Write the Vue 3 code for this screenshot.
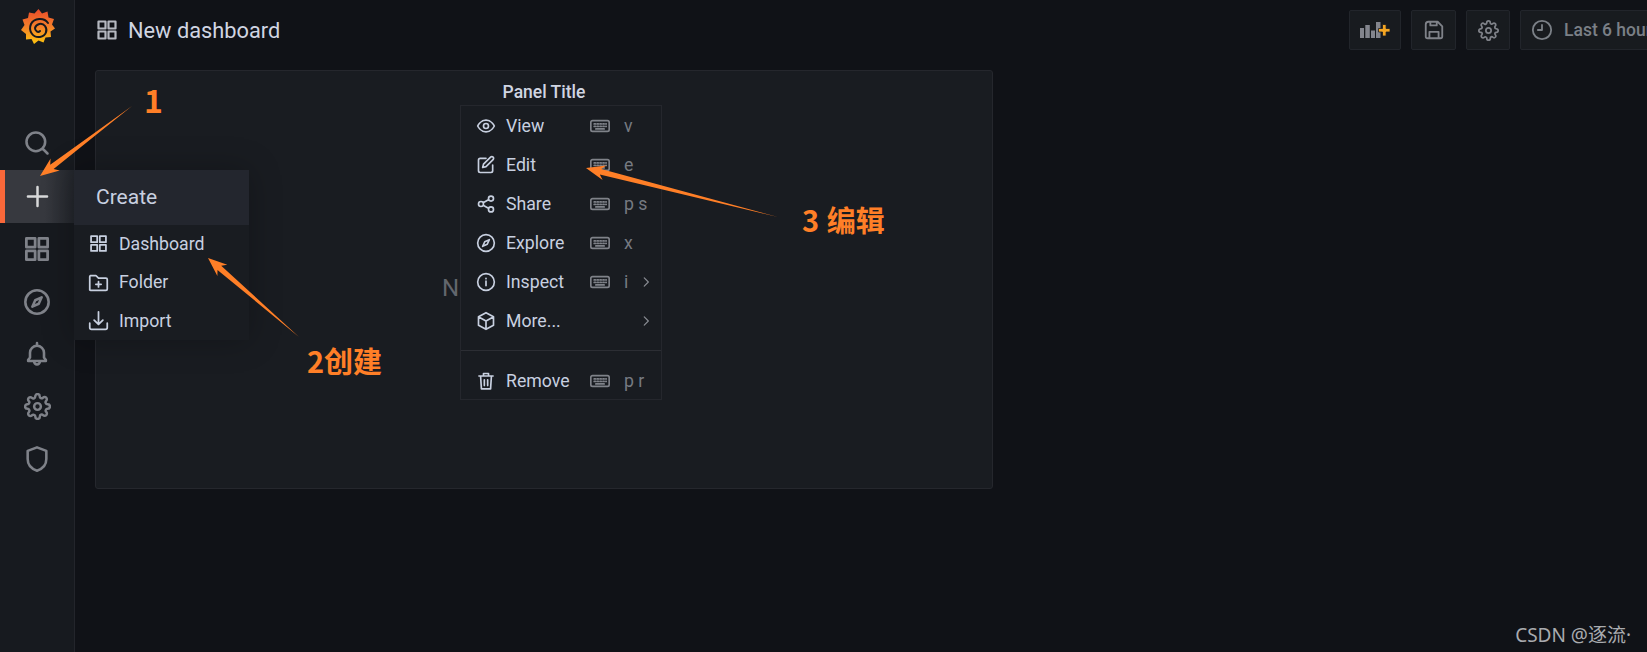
<script setup>
// svg paths, all on a 24 box
const icons = {
  search: "M11 3a8 8 0 1 0 0 16a8 8 0 1 0 0-16M21 21l-4.4-4.4",
  plus: "M12 3.500v17M3.500 12h17",
  grid: "M3.500 3.500h7v7h-7zM13.500 3.500h7v7h-7zM3.500 13.500h7v7h-7zM13.500 13.500h7v7h-7z",
  compass: "M12 2a10 10 0 1 0 0 20a10 10 0 1 0 0-20M16 8l-2.500 5.500L8 16l2.500-5.500z",
  bell: "M6 15v-4a6 6 0 0 1 12 0v4l1.600 2.200v.8H4.400v-.8zM12 2.500v2.500M9.500 18.500a2.500 2.500 0 0 0 5 0",
  gear: "M19.4 15a1.65 1.65 0 0 0 .33 1.82l.06.06a2 2 0 0 1 0 2.83 2 2 0 0 1-2.83 0l-.06-.06a1.65 1.65 0 0 0-1.82-.33 1.65 1.65 0 0 0-1 1.51V21a2 2 0 0 1-2 2 2 2 0 0 1-2-2v-.09A1.65 1.65 0 0 0 9 19.4a1.65 1.65 0 0 0-1.82.33l-.06.06a2 2 0 0 1-2.83 0 2 2 0 0 1 0-2.83l.06-.06a1.65 1.65 0 0 0 .33-1.82 1.65 1.65 0 0 0-1.51-1H3a2 2 0 0 1-2-2 2 2 0 0 1 2-2h.09A1.65 1.65 0 0 0 4.6 9a1.65 1.65 0 0 0-.33-1.82l-.06-.06a2 2 0 0 1 0-2.83 2 2 0 0 1 2.83 0l.06.06a1.65 1.65 0 0 0 1.82.33H9a1.65 1.65 0 0 0 1-1.51V3a2 2 0 0 1 2-2 2 2 0 0 1 2 2v.09a1.65 1.65 0 0 0 1 1.51 1.65 1.65 0 0 0 1.82-.33l.06-.06a2 2 0 0 1 2.83 0 2 2 0 0 1 0 2.83l-.06.06a1.65 1.65 0 0 0-.33 1.82V9a1.65 1.65 0 0 0 1.51 1H21a2 2 0 0 1 2 2 2 2 0 0 1-2 2h-.09a1.65 1.65 0 0 0-1.51 1zM12 9a3 3 0 1 0 0 6a3 3 0 1 0 0-6",
  shield: "M12 2l8 3v7c0 5-3.500 8.500-8 10-4.500-1.500-8-5-8-10V5z",
  eye: "M2 12s3.500-7 10-7 10 7 10 7-3.500 7-10 7-10-7-10-7zM12 9a3 3 0 1 0 0 6a3 3 0 1 0 0-6",
  edit: "M12 4H5a2 2 0 0 0-2 2v13a2 2 0 0 0 2 2h13a2 2 0 0 0 2-2v-7M17.500 2.500a2.100 2.100 0 0 1 3 3L12 14l-4 1 1-4z",
  share: "M18 2.500a3 3 0 1 0 0 6a3 3 0 1 0 0-6M6 9a3 3 0 1 0 0 6a3 3 0 1 0 0-6M18 15.500a3 3 0 1 0 0 6a3 3 0 1 0 0-6M8.600 13.500l6.800 3.800M15.400 6.700l-6.800 3.800",
  info: "M12 2a10 10 0 1 0 0 20a10 10 0 1 0 0-20M12 11v5.500M12 7.500v.5",
  cube: "M12 2l9 5v10l-9 5-9-5V7zM3.300 7.200L12 12l8.700-4.800M12 22V12",
  trash: "M3.500 6h17M9 6V3h6v3M5.500 6l1 15.500h11l1-15.500M10 10.500v7M14 10.500v7",
  keyboard: "M3 5.500h18a2 2 0 0 1 2 2v9a2 2 0 0 1-2 2H3a2 2 0 0 1-2-2v-9a2 2 0 0 1 2-2zM5 9.500h1.500M8.500 9.500H10M12 9.500h1.500M15.500 9.500H17M19 9.500h.5M5 12.500h1.500M8.500 12.500H10M12 12.500h1.500M15.500 12.500H17M19 12.500h.5M7 15.500h10",
  chevron: "M9 5l7 7-7 7",
  folder: "M3 4h6l3 3h8.500a1.500 1.500 0 0 1 1.500 1.500v11a1.500 1.500 0 0 1-1.500 1.500h-17A1.500 1.500 0 0 1 2 20.500v-15A1.500 1.500 0 0 1 3 4zM12 11v6M9 14h6",
  download: "M2 15v5a2 2 0 0 0 2 2h16a2 2 0 0 0 2-2v-5M12 2v14M7 11.500l5 5 5-5",
  save: "M6 3h10l5 5v11a2 2 0 0 1-2 2H5a2 2 0 0 1-2-2V6a3 3 0 0 1 3-3zM7 21v-7h10v7M8 3v4h7V3",
  clock: "M12 2a10 10 0 1 0 0 20a10 10 0 1 0 0-20M12 6.500V12H7.500",
}

const sideItems = [
  { icon: "search", size: 28 },
  { icon: "plus", size: 27, active: true },
  { icon: "grid", size: 30 },
  { icon: "compass", size: 28 },
  { icon: "bell", size: 28 },
  { icon: "gear", size: 27 },
  { icon: "shield", size: 28 },
]

const createItems = [
  { icon: "grid", label: "Dashboard" },
  { icon: "folder", label: "Folder" },
  { icon: "download", label: "Import" },
]

const panelMenu = [
  { icon: "eye", label: "View", key: "v" },
  { icon: "edit", label: "Edit", key: "e" },
  { icon: "share", label: "Share", key: "p s" },
  { icon: "compass", label: "Explore", key: "x" },
  { icon: "info", label: "Inspect", key: "i", more: true },
  { icon: "cube", label: "More...", more: true },
]

// tapered annotation arrows: thin tail, wide head with a notch
const arrowPoints = (x1, y1, x2, y2) => {
  const len = Math.hypot(x2 - x1, y2 - y1)
  const ux = (x2 - x1) / len
  const uy = (y2 - y1) / len
  const nx = -uy
  const ny = ux
  const at = (back, side) => `${(x2 - ux * back + nx * side).toFixed(1)},${(y2 - uy * back + ny * side).toFixed(1)}`
  return [
    `${x1},${y1}`,
    at(15, 2.8),
    at(19, 7.5),
    `${x2},${y2}`,
    at(19, -7.5),
    at(15, -2.8),
  ].join(" ")
}

const arrows = [
  arrowPoints(132, 106, 40, 176),
  arrowPoints(299, 337, 208, 258),
  arrowPoints(778, 217, 586, 168),
]
</script>

<template>
  <div class="page">
    <aside class="sidebar">
      <div class="logo">
        <svg width="34" height="36" viewBox="0 0 34 36">
          <defs>
            <linearGradient id="flame" x1="0" y1="0" x2="0" y2="1">
              <stop offset="0" stop-color="#ea4b2a" />
              <stop offset="0.5" stop-color="#f57f2a" />
              <stop offset="1" stop-color="#fcc40e" />
            </linearGradient>
          </defs>
          <path
            fill="url(#flame)"
            d="M17.500 0l3.500 4.500 5.500-2 1 6 5.500 1.500-2 5.500 3 4-4.500 3 .5 5.500-5.500 .5-2 5-5-2-4.500 3.500-2.500-5-5.500 .5 0-5.500L0 21l3.500-5-2-5.500 5.500-1.500 1-5.500 5.500 1z"
          />
          <path
            fill="none"
            stroke="#16181d"
            stroke-width="2"
            stroke-linecap="round"
            d="M27 14C23 8 13 9 10 15C7 22 12 29 19 28C25 27 27 21 24 17C21 13 15 15 14 19C14 22 17 24 19 22"
          />
        </svg>
      </div>
      <nav class="side-nav">
        <a v-for="item in sideItems" :key="item.icon" class="side-item" :class="{ active: item.active }">
          <svg class="ico" :width="item.size" :height="item.size" viewBox="0 0 24 24"><path :d="icons[item.icon]" /></svg>
        </a>
      </nav>
    </aside>

    <main class="main">
      <header class="topbar">
        <div class="title">
          <svg class="ico title-ico" width="24" height="24" viewBox="0 0 24 24"><path :d="icons.grid" /></svg>
          <span>New dashboard</span>
        </div>
        <div class="tools">
          <button class="tool wide">
            <svg width="30" height="16" viewBox="0 0 30 16">
              <path fill="#83858d" d="M0 6h4v10H0zM5.300 3h4.500v13H5.300zM11 8.500h4V16h-4zM16 0h4.500v16H16z" />
              <path fill="#f5a623" stroke="#1a1c21" stroke-width="0.800" d="M22.500 2.500h3.600v4h3.900V10h-3.900v4h-3.600v-4h-4V6.500h4z" />
            </svg>
          </button>
          <button class="tool">
            <svg class="ico" width="22" height="22" viewBox="0 0 24 24"><path :d="icons.save" /></svg>
          </button>
          <button class="tool narrow">
            <svg class="ico" width="21" height="21" viewBox="0 0 24 24"><path :d="icons.gear" /></svg>
          </button>
          <button class="tool time">
            <svg class="ico" width="22" height="22" viewBox="0 0 24 24"><path :d="icons.clock" /></svg>
            <span>Last 6 hours</span>
          </button>
        </div>
      </header>

      <section class="panel">
        <div class="panel-title">Panel Title</div>
        <div class="panel-body">No data in response</div>
      </section>
    </main>

    <div class="create-menu">
      <div class="create-head">Create</div>
      <a v-for="item in createItems" :key="item.label" class="create-item">
        <svg class="ico" width="21" height="21" viewBox="0 0 24 24"><path :d="icons[item.icon]" /></svg>
        <span>{{ item.label }}</span>
      </a>
    </div>

    <div class="panel-menu">
      <a v-for="item in panelMenu" :key="item.label" class="menu-row">
        <svg class="ico" width="20" height="20" viewBox="0 0 24 24"><path :d="icons[item.icon]" /></svg>
        <span class="menu-label">{{ item.label }}</span>
        <template v-if="item.key">
          <svg class="ico kbd" width="20" height="20" viewBox="0 0 24 24"><path :d="icons.keyboard" /></svg>
          <span class="menu-key">{{ item.key }}</span>
        </template>
        <svg v-if="item.more" class="ico chevron" width="14" height="14" viewBox="0 0 24 24"><path :d="icons.chevron" /></svg>
      </a>
      <div class="menu-sep"></div>
      <a class="menu-row">
        <svg class="ico" width="20" height="20" viewBox="0 0 24 24"><path :d="icons.trash" /></svg>
        <span class="menu-label">Remove</span>
        <svg class="ico kbd" width="20" height="20" viewBox="0 0 24 24"><path :d="icons.keyboard" /></svg>
        <span class="menu-key">p r</span>
      </a>
    </div>

    <svg class="arrows" width="1647" height="652">
      <polygon v-for="(pts, i) in arrows" :key="i" :points="pts" fill="#ff7f27" />
    </svg>
    <span class="note note-1">1</span>
    <span class="note note-2">2创建</span>
    <span class="note note-3">3 编辑</span>
    <span class="watermark">CSDN @逐流·</span>
  </div>
</template>

<style>
html, body {
  margin: 0;
  background: #101217;
  overflow: hidden;
}
</style>

<style scoped>
.page {
  position: relative;
  display: flex;
  width: 1647px;
  height: 652px;
  overflow: hidden;
  background: #101217;
  color: #c7d0d9;
  font-family: Roboto, "Noto Sans CJK SC", sans-serif;
}
.ico {
  flex: none;
  fill: none;
  stroke: currentColor;
  stroke-width: 2;
  stroke-linecap: round;
  stroke-linejoin: round;
}

.sidebar {
  flex: none;
  width: 74px;
  height: 100%;
  background: #171a1f;
  border-right: 1px solid #23252b;
}
.logo {
  display: flex;
  justify-content: center;
  box-sizing: border-box;
  padding: 9px 0 0 1px;
  height: 50px;
}
.side-nav {
  display: flex;
  flex-direction: column;
  padding-top: 66px;
}
.side-item {
  display: flex;
  align-items: center;
  justify-content: center;
  height: 52.500px;
  color: #7f8289;
}
.side-item .ico {
  stroke-width: 2.200;
}
.side-item:first-child {
  height: 54px;
}
.side-item.active {
  color: #d8d9da;
  height: 53px;
  background: linear-gradient(90deg, #37393f 60%, #23262c);
  box-shadow: inset 5px 0 0 #f9683a;
}

.main {
  flex: 1;
  min-width: 0;
  padding: 0 0 0 20px;
}
.topbar {
  display: flex;
  align-items: center;
  justify-content: space-between;
  height: 60px;
  margin-bottom: 10px;
}
.title {
  display: flex;
  align-items: center;
  gap: 9px;
  font-size: 21.800px;
  color: #d0d5e2;
}
.title-ico {
  color: #b5b8c0;
  stroke-width: 2.200;
}
.tools {
  display: flex;
  gap: 10px;
  margin-right: -131px;
}
.tool {
  display: flex;
  align-items: center;
  justify-content: center;
  width: 45px;
  height: 40px;
  padding: 0;
  background: #181b1f;
  border: 1px solid #22252b;
  border-radius: 2px;
  color: #7f8289;
}
.tool.wide {
  width: 52px;
}
.tool.narrow {
  width: 44px;
}
.tool.time {
  width: 258px;
  justify-content: flex-start;
  padding-left: 10px;
  gap: 11px;
  font: 500 17.500px Roboto, sans-serif;
  color: #7b8087;
}

.panel {
  width: 898px;
  height: 419px;
  box-sizing: border-box;
  background: #191c21;
  border: 1px solid #25272d;
  border-radius: 3px;
}
.panel-title {
  padding-top: 11px;
  text-align: center;
  font-size: 17.500px;
  font-weight: 500;
  color: #d0d5e2;
}
.panel-body {
  padding: 172px 0 0 10px;
  text-align: center;
  font-size: 24px;
  color: #62666d;
}

.create-menu {
  position: absolute;
  left: 74px;
  top: 170px;
  width: 175px;
  background: #191c21;
  box-shadow: 0 0 30px rgba(0, 0, 0, 0.25);
}
.create-head {
  display: flex;
  align-items: center;
  height: 54.500px;
  padding-left: 22px;
  background: #23262e;
  font-size: 21px;
  color: #c8d0e0;
}
.create-item {
  display: flex;
  align-items: center;
  gap: 10.500px;
  height: 38.500px;
  padding-left: 13.500px;
  font-size: 17.700px;
  color: #c8d0e0;
}

.panel-menu {
  position: absolute;
  left: 460px;
  top: 105px;
  box-sizing: border-box;
  width: 202px;
  height: 295px;
  background: #191c21;
  border: 1px solid #25272d;
}
.menu-row {
  position: relative;
  display: flex;
  align-items: center;
  height: 39px;
  padding-left: 15px;
  font-size: 17.700px;
  color: #c8d0e0;
}
.menu-label {
  margin-left: 10px;
  width: 83.500px;
}
.kbd {
  color: #7f8289;
  margin-right: 14.500px;
}
.menu-key {
  color: #767a81;
}
.chevron {
  position: absolute;
  right: 8px;
  top: 12.500px;
  color: #8a8d94;
}
.menu-sep {
  height: 1px;
  margin-top: 10px;
  margin-bottom: 10px;
  background: #2c2e34;
}

.arrows {
  position: absolute;
  left: 0;
  top: 0;
  pointer-events: none;
}
.note {
  position: absolute;
  color: #ff7f27;
  font-family: "Noto Sans CJK SC", sans-serif;
  font-weight: 700;
  font-size: 29px;
  line-height: 1;
}
.note-1 {
  left: 144px;
  top: 83px;
  font-size: 32px;
}
.note-2 {
  left: 307px;
  top: 346px;
}
.note-3 {
  left: 802px;
  top: 205px;
  word-spacing: 1px;
}
.watermark {
  position: absolute;
  right: 16px;
  top: 620px;
  font-family: "Noto Sans", "Noto Sans CJK SC", sans-serif;
  font-size: 19px;
  color: #a9abaf;
}
</style>
